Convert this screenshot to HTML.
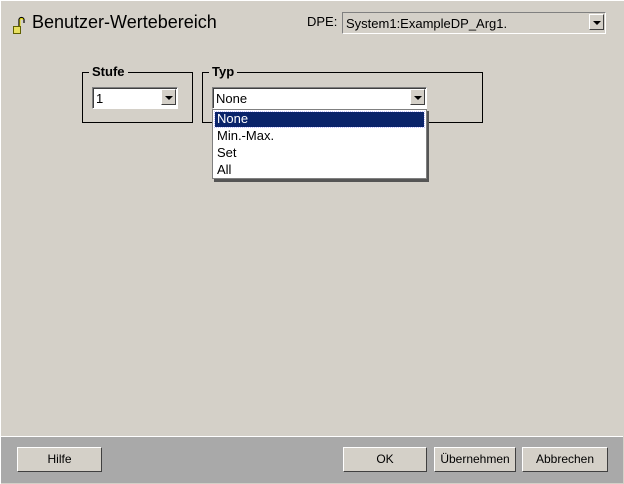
<!DOCTYPE html>
<html><head><style>
body{margin:0;width:624px;height:484px;background:#d4d0c8;font-family:"Liberation Sans",sans-serif;font-size:12px;position:relative;overflow:hidden}
.a{position:absolute}
.sunk{background:#fff;border-top:1px solid #808080;border-left:1px solid #808080;border-right:1px solid #fff;border-bottom:1px solid #fff;box-shadow:inset 1px 1px 0 #404040}
.arr{position:absolute;right:2px;top:2px;width:15px;height:16px;background:#d4d0c8;border-top:1px solid #fff;border-left:1px solid #fff;border-right:1px solid #404040;border-bottom:1px solid #404040;box-sizing:border-box}
.arr:after{content:"";position:absolute;left:3px;top:6px;border-left:4px solid transparent;border-right:4px solid transparent;border-top:4px solid #000}
.grp{border:1px solid #000;box-sizing:border-box}
.lg{position:absolute;top:-9px;left:6px;background:#d4d0c8;padding:0 3px;font-weight:bold;font-size:13px}
.btn{position:absolute;top:447px;height:25px;background:#d4d0c8;border-top:1px solid #fff;border-left:1px solid #fff;border-right:1px solid #404040;border-bottom:1px solid #404040;box-sizing:border-box;text-align:center;line-height:23px;font-size:12px}
.it{font-size:13px}
</style></head><body>
<div class="a" style="left:0;top:0;width:624px;height:484px;border-top:1px solid #fff;border-left:1px solid #fff;box-sizing:border-box"></div>
<svg class="a" style="left:12px;top:15px" width="14" height="20"><path d="M7 12V5a2.5 2.5 0 0 1 5 0v3" fill="none" stroke="#000" stroke-width="1.2"/><path d="M8 12V5a1.5 1.5 0 0 1 3 0" fill="none" stroke="#e8e000"/><rect x="1.5" y="11.5" width="7" height="7" fill="#e8e060" stroke="#606000"/></svg>
<div class="a" style="left:32px;top:12px;font-size:18px">Benutzer-Wertebereich</div>
<div class="a" style="left:307px;top:14px;font-size:13px">DPE:</div>
<div class="a sunk" style="left:342px;top:12px;width:262px;height:20px;box-shadow:none;background:#d4d0c8"><span class="a it" style="left:3px;top:3px">System1:ExampleDP_Arg1.</span><div class="arr" style="top:1px;right:1px"></div></div>

<div class="a grp" style="left:82px;top:72px;width:111px;height:51px"><span class="lg">Stufe</span></div>
<div class="a sunk" style="left:92px;top:87px;width:84px;height:20px"><span class="a it" style="left:3px;top:3px">1</span><div class="arr" style="top:1px;right:1px"></div></div>

<div class="a grp" style="left:202px;top:72px;width:281px;height:51px"><span class="lg">Typ</span></div>
<div class="a sunk" style="left:212px;top:87px;width:213px;height:20px"><span class="a it" style="left:3px;top:3px">None</span><div class="arr" style="top:1px;right:1px"></div></div>

<div class="a" style="left:214px;top:111px;width:215px;height:71px;background:#555"></div>
<div class="a it" style="left:212px;top:109px;width:215px;height:70px;background:#fff;border:1px solid #808080;box-sizing:border-box">
<div class="a" style="left:2px;top:2px;width:209px;height:15px;background:#0a246a;outline:1px dotted #c0c0ff"></div>
<div class="a" style="left:4px;top:1px;color:#fff">None</div>
<div class="a" style="left:4px;top:18px">Min.-Max.</div>
<div class="a" style="left:4px;top:35px">Set</div>
<div class="a" style="left:4px;top:52px">All</div>
</div>

<div class="a" style="left:1px;top:436px;width:622px;height:1px;background:#fff"></div>
<div class="a" style="left:1px;top:437px;width:622px;height:46px;background:#a9a9a9"></div>
<div class="btn" style="left:17px;width:85px">Hilfe</div>
<div class="btn" style="left:343px;width:84px">OK</div>
<div class="btn" style="left:434px;width:82px">Übernehmen</div>
<div class="btn" style="left:522px;width:86px">Abbrechen</div>
</body></html>
